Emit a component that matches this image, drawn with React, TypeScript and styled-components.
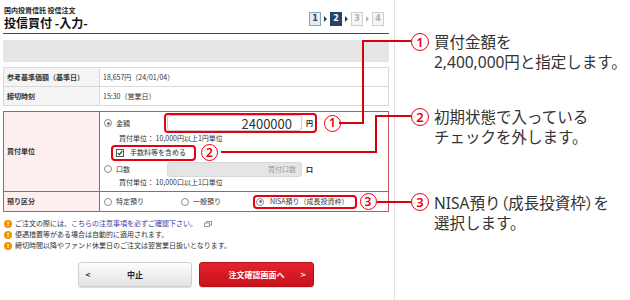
import styled, { createGlobalStyle, css } from "styled-components";

const GlobalStyle = createGlobalStyle`
  html, body {
    margin: 0;
    padding: 0;
    background: #fff;
  }
  body {
    font-family: "Noto Sans CJK JP", "Noto Sans", sans-serif;
    color: #333;
  }
`;

const RED = "#e60012";

// Page frame
const Page = styled.div`
  position: relative;
  display: flex;
  width: 630px;
  height: 300px;
  overflow: hidden;
`;

const Screen = styled.div`
  width: 395px;
  height: 300px;
  flex: none;
  box-sizing: border-box;
  border-right: 1px solid #e2e2e2;
  padding: 0 5px 0 3px;
  font-size: 7px;
  line-height: 1;
`;

// Header
const Header = styled.header`
  display: flex;
  justify-content: space-between;
  height: 33px;
  border-bottom: 1px solid #c8102e;
`;

const TitleBlock = styled.div`
  padding: 5px 0 0 1px;
`;

const Crumb = styled.div`
  font-size: 7px;
  font-weight: 700;
  line-height: 10px;
  color: #222;
`;

const Title = styled.h1`
  margin: 0;
  font-size: 12px;
  font-weight: 700;
  line-height: 16px;
  color: #111;
`;

const Steps = styled.div`
  display: flex;
  align-items: center;
  gap: 3px;
  margin: 12px 5px 0 0;
  height: 14px;
`;

const Step = styled.span<{ $state: "done" | "current" | "todo" }>`
  width: 12px;
  height: 14px;
  box-sizing: border-box;
  display: inline-flex;
  align-items: center;
  justify-content: center;
  font-family: "DejaVu Sans", sans-serif;
  font-size: 8px;
  font-weight: 700;
  border: 1px solid;
  ${(p) =>
    p.$state === "done"
      ? css`
          background: #e4eaf1;
          border-color: #8ea2b8;
          color: #2b4566;
        `
      : p.$state === "current"
      ? css`
          background: #26436a;
          border-color: #26436a;
          color: #fff;
        `
      : css`
          background: #f6f6f6;
          border-color: #cfcfcf;
          color: #b0b0b0;
        `}
`;

const StepArrow = styled.span<{ $dim?: boolean }>`
  width: 0;
  height: 0;
  border-top: 3px solid transparent;
  border-bottom: 3px solid transparent;
  border-left: 3px solid ${(p) => (p.$dim ? "#b8b8b8" : "#26436a")};
`;

const GrayBar = styled.div`
  margin-top: 6px;
  height: 22px;
  background: #e6e6e6;
`;

// Reference table
const InfoTable = styled.div`
  margin-top: 5px;
  display: grid;
  grid-template-columns: 96px 1fr;
  border-top: 1px solid #d9d9d9;
  border-left: 1px solid #d9d9d9;
`;

const Cell = styled.div<{ $label?: boolean }>`
  height: 19px;
  box-sizing: border-box;
  display: flex;
  align-items: center;
  border-right: 1px solid #d9d9d9;
  border-bottom: 1px solid #d9d9d9;
  padding-left: 3px;
  background: ${(p) => (p.$label ? "#f5f5f5" : "#fff")};
  font-weight: ${(p) => (p.$label ? 700 : 400)};
  color: #333;
`;

// Order section (red frame)
const OrderTable = styled.div`
  margin-top: 5px;
  display: grid;
  grid-template-columns: 96px 1fr;
  grid-template-rows: 80px 19px;
  border: 1px solid #c9505d;
`;

const OrderLabel = styled.div<{ $last?: boolean }>`
  display: flex;
  align-items: center;
  padding-left: 3px;
  background: #fdeeef;
  font-weight: 700;
  border-right: 1px solid #c9505d;
  border-bottom: ${(p) => (p.$last ? "none" : "1px solid #c9505d")};
`;

const UnitCell = styled.div`
  padding: 1px 0 0 4px;
  border-bottom: 1px solid #c9505d;
  display: flex;
  flex-direction: column;
  align-items: flex-start;
`;

const DepositCell = styled.div`
  display: flex;
  align-items: center;
  padding-left: 4px;
`;

const OptionRow = styled.div`
  display: flex;
  align-items: center;
  min-height: 16px;
`;

const RadioLabel = styled.label<{ $w?: number; $gap?: number }>`
  display: flex;
  align-items: center;
  gap: ${(p) => p.$gap ?? 4}px;
  width: ${(p) => (p.$w ? `${p.$w}px` : "auto")};
  flex: none;
  color: #333;
`;

const RadioDot = styled.span<{ $on?: boolean }>`
  position: relative;
  width: 8px;
  height: 8px;
  flex: none;
  box-sizing: border-box;
  border-radius: 50%;
  border: 1px solid #8c8c8c;
  background: #fff;
  ${(p) =>
    p.$on &&
    css`
      &::after {
        content: "";
        position: absolute;
        inset: 1.5px;
        border-radius: 50%;
        background: #777;
      }
    `}
`;

const Mark = styled.div<{ $pad: string; $h: number; $ml?: number }>`
  display: flex;
  align-items: center;
  height: ${(p) => p.$h}px;
  box-sizing: border-box;
  border: 2px solid ${RED};
  border-radius: 4px;
  padding: ${(p) => p.$pad};
  margin-left: ${(p) => p.$ml ?? 0}px;
  background: #fff;
`;

const Field = styled.div<{ $disabled?: boolean }>`
  width: 135px;
  height: ${(p) => (p.$disabled ? 15 : 16)}px;
  box-sizing: border-box;
  border: 1px solid ${(p) => (p.$disabled ? "#d8d8d8" : "#c8c8c8")};
  border-radius: 3px;
  background: ${(p) => (p.$disabled ? "#e5e5e5" : "#fff")};
  display: flex;
  align-items: center;
  justify-content: flex-end;
  padding-right: ${(p) => (p.$disabled ? 5 : 9)}px;
  font-size: ${(p) => (p.$disabled ? 7 : 13)}px;
  color: ${(p) => (p.$disabled ? "#9a9a9a" : "#333")};
`;

const Unit = styled.span`
  margin-left: 4px;
  font-weight: 700;
  color: #222;
`;

const Hint = styled.div`
  padding-left: 15px;
  height: 11px;
  line-height: 11px;
  color: #333;
`;

const CheckBox = styled.span`
  width: 8px;
  height: 8px;
  box-sizing: border-box;
  border: 1px solid #555;
  background: #fff;
  display: inline-flex;
  align-items: center;
  justify-content: center;
  margin-right: 6px;
`;

const Badge = styled.span<{ $size: number; $font: number; $ml?: number; $mt?: number }>`
  width: ${(p) => p.$size}px;
  height: ${(p) => p.$size}px;
  flex: none;
  box-sizing: border-box;
  border-radius: 50%;
  border: 1.5px solid ${RED};
  background: #fff;
  color: ${RED};
  display: inline-flex;
  align-items: center;
  justify-content: center;
  font-family: "Noto Sans", sans-serif;
  font-size: ${(p) => p.$font}px;
  font-weight: 600;
  line-height: 1;
  margin-left: ${(p) => p.$ml ?? 0}px;
  margin-top: ${(p) => p.$mt ?? 0}px;
`;

// Notes under the form
const NoteList = styled.ul`
  list-style: none;
  margin: 6px 0 0;
  padding: 0 0 0 1px;
`;

const NoteItem = styled.li`
  display: flex;
  align-items: center;
  gap: 3px;
  height: 11px;
  color: #333;
`;

const Caution = styled.span`
  width: 8px;
  height: 8px;
  border-radius: 50%;
  background: #f29100;
  color: #fff;
  font-family: "DejaVu Sans", sans-serif;
  font-size: 6px;
  font-weight: 700;
  display: inline-flex;
  align-items: center;
  justify-content: center;
  flex: none;
`;

const Link = styled.span`
  color: #3d3d9e;
`;

const Buttons = styled.div`
  margin-top: 11px;
  display: flex;
  justify-content: center;
  gap: 7px;
`;

const Button = styled.div<{ $primary?: boolean }>`
  position: relative;
  width: ${(p) => (p.$primary ? 115 : 114)}px;
  height: 25px;
  box-sizing: border-box;
  border-radius: 3px;
  display: flex;
  align-items: center;
  justify-content: center;
  font-size: 8px;
  font-weight: 700;
  ${(p) =>
    p.$primary
      ? css`
          background: linear-gradient(#e2232e, #c9121c);
          border: 1px solid #b80f18;
          color: #fff;
        `
      : css`
          background: linear-gradient(#fdfdfd, #e2e2e2);
          border: 1px solid #cfcfcf;
          color: #222;
        `}
  box-shadow: 0 1px 1px rgba(0, 0, 0, 0.15);
`;

const Chevron = styled.span<{ $side: "left" | "right" }>`
  position: absolute;
  top: 50%;
  transform: translateY(-50%);
  ${(p) => (p.$side === "left" ? "left: 6px;" : "right: 7px;")}
  font-family: "DejaVu Sans", sans-serif;
  font-size: 7px;
  font-weight: 700;
`;

// Annotations (right column)
const Annotations = styled.div`
  flex: 1;
  padding-left: 16px;
  display: flex;
  flex-direction: column;
`;

const Annotation = styled.div<{ $top: number }>`
  margin-top: ${(p) => p.$top}px;
  display: flex;
  align-items: flex-start;
  gap: 5px;
`;

const AnnotationText = styled.p`
  margin: 0;
  font-family: "Noto Sans", "Noto Sans CJK JP", sans-serif;
  font-size: 15.5px;
  line-height: 20px;
  color: #333;
  white-space: nowrap;
`;

const Tight = styled.span`
  font-family: "Noto Sans CJK JP", sans-serif;
  font-feature-settings: "palt";
`;

const Connectors = styled.svg`
  position: absolute;
  left: 0;
  top: 0;
  pointer-events: none;
`;

export default function App() {
  return (
    <Page>
      <GlobalStyle />
      <Screen>
        <Header>
          <TitleBlock>
            <Crumb>国内投資信託 投信注文</Crumb>
            <Title>投信買付 -入力-</Title>
          </TitleBlock>
          <Steps>
            <Step $state="done">1</Step>
            <StepArrow />
            <Step $state="current">2</Step>
            <StepArrow />
            <Step $state="todo">3</Step>
            <StepArrow $dim />
            <Step $state="todo">4</Step>
          </Steps>
        </Header>

        <GrayBar />

        <InfoTable>
          <Cell $label>参考基準価額（基準日）</Cell>
          <Cell>18,657円（24/01/04）</Cell>
          <Cell $label>締切時刻</Cell>
          <Cell>15:30（営業日）</Cell>
        </InfoTable>

        <OrderTable>
          <OrderLabel>買付単位</OrderLabel>
          <UnitCell>
            <OptionRow>
              <RadioLabel $w={60}>
                <RadioDot $on />
                金額
              </RadioLabel>
              <Mark $pad="0 2px 0 1px" $h={20}>
                <Field>2400000</Field>
                <Unit>円</Unit>
              </Mark>
              <Badge $size={17} $font={12} $ml={7}>
                1
              </Badge>
            </OptionRow>
            <Hint>買付単位： 10,000円以上1円単位</Hint>
            <OptionRow>
              <Mark $pad="0 8px 0 3px" $h={16} $ml={7}>
                <CheckBox>
                  <svg width="6" height="6" viewBox="0 0 6 6">
                    <path d="M0.8 3.1 L2.4 4.6 L5.2 1.2" fill="none" stroke="#333" strokeWidth="1.3" />
                  </svg>
                </CheckBox>
                手数料等を含める
              </Mark>
              <Badge $size={17} $font={12} $ml={5}>
                2
              </Badge>
            </OptionRow>
            <OptionRow>
              <RadioLabel $w={63}>
                <RadioDot />
                口数
              </RadioLabel>
              <Field $disabled>買付口数</Field>
              <Unit>口</Unit>
            </OptionRow>
            <Hint>買付単位： 10,000口以上1口単位</Hint>
          </UnitCell>

          <OrderLabel $last>預り区分</OrderLabel>
          <DepositCell>
            <RadioLabel $w={77}>
              <RadioDot />
              特定預り
            </RadioLabel>
            <RadioLabel $w={72}>
              <RadioDot />
              一般預り
            </RadioLabel>
            <Mark $pad="0 6px 0 1px" $h={14}>
              <RadioLabel $gap={6}>
                <RadioDot $on />
                NISA預り（成長投資枠）
              </RadioLabel>
            </Mark>
            <Badge $size={17} $font={12} $ml={3}>
              3
            </Badge>
          </DepositCell>
        </OrderTable>

        <NoteList>
          <NoteItem>
            <Caution>!</Caution>
            <span>
              ご注文の際には、<Link>こちらの注意事項を必ずご確認下さい。</Link>
            </span>
            <svg width="8" height="6" viewBox="0 0 8 6" style={{ marginLeft: 4 }}>
              <rect x="2.5" y="0.5" width="5" height="3.5" fill="none" stroke="#999" />
              <rect x="0.5" y="2" width="5" height="3.5" fill="#fff" stroke="#999" />
            </svg>
          </NoteItem>
          <NoteItem>
            <Caution>!</Caution>
            <span>優遇措置等がある場合は自動的に適用されます。</span>
          </NoteItem>
          <NoteItem>
            <Caution>!</Caution>
            <span>締切時間以降やファンド休業日のご注文は翌営業日扱いとなります。</span>
          </NoteItem>
        </NoteList>

        <Buttons>
          <Button>
            <Chevron $side="left">&lt;</Chevron>
            中止
          </Button>
          <Button $primary>
            注文確認画面へ
            <Chevron $side="right">&gt;</Chevron>
          </Button>
        </Buttons>
      </Screen>

      <Annotations>
        <Annotation $top={32}>
          <Badge $size={18} $font={13} $mt={1}>
            1
          </Badge>
          <AnnotationText>
            買付金額を
            <br />
            2,400,000円と指定します。
          </AnnotationText>
        </Annotation>
        <Annotation $top={35}>
          <Badge $size={18} $font={13} $mt={1}>
            2
          </Badge>
          <AnnotationText>
            初期状態で入っている
            <br />
            チェックを外します。
          </AnnotationText>
        </Annotation>
        <Annotation $top={45}>
          <Badge $size={18} $font={13} $mt={1}>
            3
          </Badge>
          <AnnotationText>
            NISA預り<Tight>（</Tight>成長投資枠<Tight>）</Tight>を
            <br />
            選択します。
          </AnnotationText>
        </Annotation>
      </Annotations>

      <Connectors width="630" height="300" viewBox="0 0 630 300">
        <g fill="none" stroke="#d9000f" strokeWidth="2">
          <polyline points="339,123 363,123 363,41 411,41" />
          <polyline points="221,152 376,152 376,116 411,116" />
          <polyline points="377,202 411,202" />
        </g>
      </Connectors>
    </Page>
  );
}
